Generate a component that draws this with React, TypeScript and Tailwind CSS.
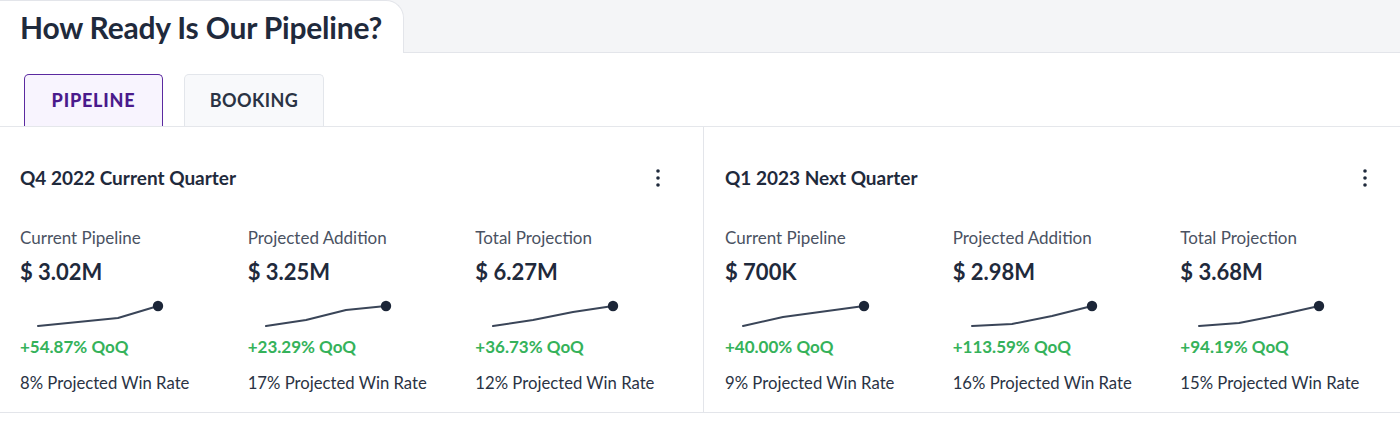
import React from 'react';

type Metric = { label: string; value: string; qoq: string; win: string; pts: number[][] };

const quarters: { title: string; metrics: Metric[] }[] = [
  {
    title: 'Q4 2022 Current Quarter',
    metrics: [
      { label: 'Current Pipeline', value: '$ 3.02M', qoq: '+54.87% QoQ', win: '8% Projected Win Rate', pts: [[18, 26], [98, 18], [138, 6]] },
      { label: 'Projected Addition', value: '$ 3.25M', qoq: '+23.29% QoQ', win: '17% Projected Win Rate', pts: [[18, 26], [58, 20], [98, 10], [138, 6]] },
      { label: 'Total Projection', value: '$ 6.27M', qoq: '+36.73% QoQ', win: '12% Projected Win Rate', pts: [[18, 26], [58, 20], [98, 12], [138, 6]] },
    ],
  },
  {
    title: 'Q1 2023 Next Quarter',
    metrics: [
      { label: 'Current Pipeline', value: '$ 700K', qoq: '+40.00% QoQ', win: '9% Projected Win Rate', pts: [[18, 26], [58, 17], [139, 6]] },
      { label: 'Projected Addition', value: '$ 2.98M', qoq: '+113.59% QoQ', win: '16% Projected Win Rate', pts: [[19, 26], [59, 24], [99, 16], [139, 6]] },
      { label: 'Total Projection', value: '$ 3.68M', qoq: '+94.19% QoQ', win: '15% Projected Win Rate', pts: [[19, 26], [59, 23], [99, 15], [139, 6]] },
    ],
  },
];

function Sparkline({ pts }: { pts: number[][] }) {
  const last = pts[pts.length - 1];
  return (
    <svg width="150" height="30" viewBox="0 0 150 30" className="block">
      <polyline
        points={pts.map((p) => p.join(',')).join(' ')}
        fill="none"
        stroke="#3a4558"
        strokeWidth="2"
        strokeLinejoin="round"
        strokeLinecap="round"
      />
      <circle cx={last[0]} cy={last[1]} r="5.2" fill="#1c2638" />
    </svg>
  );
}

function Kebab() {
  return (
    <svg width="6" height="20" viewBox="0 0 6 20" className="block">
      <circle cx="3" cy="3" r="1.8" fill="#1f2a3c" />
      <circle cx="3" cy="10" r="1.8" fill="#1f2a3c" />
      <circle cx="3" cy="17" r="1.8" fill="#1f2a3c" />
    </svg>
  );
}

export default function App() {
  return (
    <div className="w-[1400px] h-[433px] bg-white overflow-hidden text-[#1f2a3c]" style={{ fontFamily: 'Lato, "Noto Sans", sans-serif' }}>
      {/* header tab strip */}
      <div className="flex h-[53px] bg-[#f4f5f7] border-b border-[#e3e5ea]">
        <div className="w-[404px] bg-white border-r border-t border-[#e3e5ea] rounded-tr-[18px] flex items-center pl-5 -mb-px">
          <h1 className="text-[30px] leading-9 font-bold tracking-[-0.2px] text-[#1f2a3c]">How Ready Is Our Pipeline?</h1>
        </div>
      </div>

      {/* segmented tabs */}
      <div className="flex items-end gap-[21px] pl-6 pt-[21px] border-b border-[#e5e7eb]">
        <button className="w-[139px] h-[52px] bg-[#f8f4fe] border border-b-0 border-[#5b2aa0] rounded-t-[5px] text-[18px] font-black tracking-[0.8px] text-[#4a1a8c]">
          PIPELINE
        </button>
        <button className="w-[140px] h-[52px] bg-[#f8f9fb] border border-b-0 border-[#e3e6eb] rounded-t-[5px] text-[18px] font-bold tracking-[0.4px] text-[#2a3344]">
          BOOKING
        </button>
      </div>

      {/* quarter cards */}
      <div className="grid grid-cols-[704px_704px] border-b border-[#e3e5ea]">
        {quarters.map((q, qi) => (
          <div key={q.title} className={qi === 0 ? 'border-r border-[#e3e5ea] pl-5 pt-[39px] pb-[19px]' : 'pl-[21px] pt-[39px] pb-[19px]'}>
            <div className={qi === 0 ? 'flex items-center justify-between h-6 pr-[42px]' : 'flex items-center justify-between h-6 pr-[40px]'}>
              <h3 className="text-[19px] font-bold text-[#1f2a3c]">{q.title}</h3>
              <Kebab />
            </div>
            <div className="flex mt-[38px]">
              {q.metrics.map((m) => (
                <div key={m.label} className="w-[228px]">
                  <p className="text-[17px] leading-5 text-[#4a5262]">{m.label}</p>
                  <p className="mt-[10px] text-[22px] leading-7 font-bold text-[#1f2a3c]">{m.value}</p>
                  <div className="mt-[14px]">
                    <Sparkline pts={m.pts} />
                  </div>
                  <p className="mt-[7px] text-[17px] leading-5 font-bold text-[#35b25a]">{m.qoq}</p>
                  <p className="mt-4 text-[16.7px] leading-5 text-[#2a3344]">{m.win}</p>
                </div>
              ))}
            </div>
          </div>
        ))}
      </div>
    </div>
  );
}
